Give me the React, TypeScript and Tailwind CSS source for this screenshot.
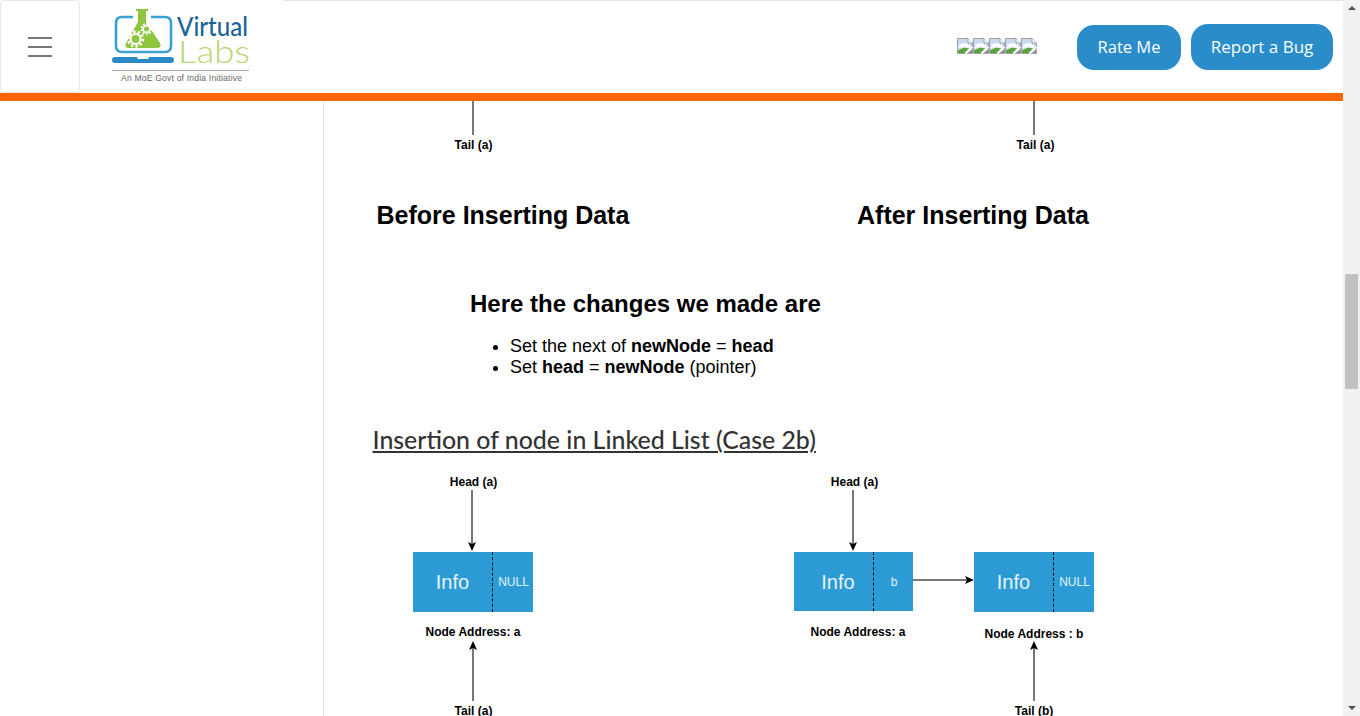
import React from 'react';

const arial = "font-['Liberation_Sans',Arial,sans-serif]";

const Logo = () => (
  <svg width="160" height="90" viewBox="100 0 160 90" aria-label="Virtual Labs">
    {/* laptop */}
    <path d="M133 17 H122 Q116 17 116 23 V46 Q116 52 122 52 H165 Q171 52 171 46 V23 Q171 17 165 17 H151" fill="none" stroke="#3a9fd3" strokeWidth="2.6" />
    <rect x="112" y="57" width="62" height="6" rx="3" fill="#2b8ac6" />
    <rect x="137" y="55" width="12" height="4" rx="2" fill="#fff" />
    {/* flask */}
    <path d="M136 9 H148 V11 H146 V22 L160 43 Q162 48 157 48 H129 Q124 48 126 43 L138 22 V11 H136 Z" fill="#8fc640" />
    <circle cx="135.5" cy="39" r="5" fill="none" stroke="#fff" strokeWidth="2.2" />
    <circle cx="135.5" cy="39" r="7.4" fill="none" stroke="#fff" strokeWidth="2.6" strokeDasharray="2.4 2.2" />
    <circle cx="146.5" cy="29" r="3.4" fill="none" stroke="#fff" strokeWidth="1.8" />
    <circle cx="146.5" cy="29" r="5.2" fill="none" stroke="#fff" strokeWidth="1.8" strokeDasharray="1.8 1.6" />
    <text x="177" y="36" fontFamily="Lato, sans-serif" fontSize="26" fontWeight="500" fill="#1c6497" textLength="71" lengthAdjust="spacingAndGlyphs">Virtual</text>
    <text x="178" y="63" fontFamily="Lato, sans-serif" fontSize="32" fontWeight="300" fill="#b7d670" textLength="72" lengthAdjust="spacingAndGlyphs">Labs</text>
    <rect x="112" y="70" width="137" height="1" fill="#aaa" />
    <text x="121" y="81" fontFamily="Liberation Sans, sans-serif" fontSize="8.6" fill="#666" textLength="121">An MoE Govt of India Initiative</text>
  </svg>
);

// the browser's missing-image glyph
const BrokenImage = () => (
  <svg width="16" height="16" viewBox="0 0 16 16" className="shrink-0">
    <path d="M0.5 0.5 H11 L15.5 5 V15.5 H0.5 Z" fill="#c9dcf3" stroke="#a0a0a0" />
    <path d="M11 0.5 V5 H15.5" fill="#fff" stroke="#a0a0a0" />
    <path d="M2 8 Q4 4.5 7 5.5 Q10 4.5 13 8 V9 H2 Z" fill="#fff" />
    <path d="M1 9 H15 V10 H1 Z" fill="#eef4fb" />
    <path d="M1 15 V12.5 L7 9.5 L12 10.5 L7.5 15 Z" fill="#5aa33a" />
    <path d="M8.5 15.5 L15.5 9" stroke="#fff" strokeWidth="1.8" />
    <path d="M11 15 L15 11.5 V15 Z" fill="#8a8a8a" />
  </svg>
);

const Header = () => (
  <header className="flex h-[93px] shrink-0 bg-white">
    <div className="flex h-[93px] w-[80px] flex-col items-center justify-center gap-[7px] rounded border border-[#e8e8e8]">
      <div className="h-[2px] w-[24px] bg-[#777]" />
      <div className="h-[2px] w-[24px] bg-[#777]" />
      <div className="h-[2px] w-[24px] bg-[#777]" />
    </div>
    <div className="w-[203px]">
      <div className="ml-[20px]">
        <Logo />
      </div>
    </div>
    <div className="flex flex-1 items-center justify-end border-t border-[#e3e3e3] pr-[10px]">
      <div className="mr-[40px] flex -translate-y-[1px]">
        {[0, 1, 2, 3, 4].map((i) => (
          <BrokenImage key={i} />
        ))}
      </div>
      <button className="mr-[10px] mt-[1px] h-[45px] w-[104px] rounded-[17px] bg-[#2a8dc9] font-['Open_Sans',sans-serif] text-[16.5px] text-white">
        Rate Me
      </button>
      <button className="h-[46px] w-[142px] rounded-[17px] bg-[#2a8dc9] pb-[1px] font-['Open_Sans',sans-serif] text-[17px] text-white">
        Report a Bug
      </button>
    </div>
  </header>
);

const Label = ({ className, children }: { className: string; children: React.ReactNode }) => (
  <span className={`absolute -translate-x-1/2 whitespace-nowrap text-[12px] leading-[14px] font-bold text-black ${className}`}>
    {children}
  </span>
);

const Node = ({ className, split, next }: { className: string; split: string; next: string }) => (
  <div className={`absolute flex bg-[#2c9bd5] text-[#e6f4fb] ${className}`}>
    <div className={`flex w-[80px] items-center justify-center border-r border-dashed border-black text-[20px] ${split}`}>Info</div>
    <div className="flex flex-1 items-center justify-center pl-[1px] text-[12px]">{next}</div>
  </div>
);

const Arrows = () => (
  <svg className="absolute left-0 top-0" width="1019" height="246" viewBox="324 470 1019 246">
    <g stroke="#777" strokeWidth="2" fill="none">
      <path d="M472 491 V546" />
      <path d="M473 702 V648" />
      <path d="M853 491 V546" />
      <path d="M913 581 H968" />
      <path d="M1034 702 V648" />
    </g>
    <g fill="#000">
      <path d="M468 543 L472 545 L476 543 L472 552 Z" />
      <path d="M469 651 L473 649 L477 651 L473 642 Z" />
      <path d="M849 543 L853 545 L857 543 L853 552 Z" />
      <path d="M965 577 L967 581 L965 585 L974 581 Z" />
      <path d="M1030 651 L1034 649 L1038 651 L1034 642 Z" />
    </g>
  </svg>
);

const App = () => (
  <div className={`flex h-[716px] w-[1360px] overflow-hidden bg-white ${arial}`}>
    <div className="flex min-w-0 flex-1 flex-col">
      <Header />
      <div className="h-[8px] shrink-0 bg-[#fd6500]" />
      <div className="flex min-h-0 flex-1">
        <aside className="w-[324px] shrink-0 border-r border-[#e5e5e5]" />
        <main className="min-w-0 flex-1">
          {/* end of the previous diagram */}
          <div className="relative h-[58px]">
            <div className="absolute left-[148px] top-0 h-[34px] w-[2px] bg-[#777]" />
            <div className="absolute left-[709px] top-0 h-[34px] w-[2px] bg-[#777]" />
            <Label className="left-[149.5px] top-[37px]">Tail (a)</Label>
            <Label className="left-[711.5px] top-[37px]">Tail (a)</Label>
          </div>

          <div className="mt-[42px] flex pl-[52.5px] text-[25px] leading-[29px] font-bold text-black">
            <h2 className="w-[480.5px]">Before Inserting Data</h2>
            <h2>After Inserting Data</h2>
          </div>

          <div className="mt-[60px] pl-[146px] text-black">
            <h2 className="text-[24px] leading-[28px] font-bold">Here the changes we made are</h2>
            <ul className="mt-[18px] list-disc pl-[40px] text-[18px] leading-[21px]">
              <li>
                Set the next of <b>newNode</b> = <b>head</b>
              </li>
              <li>
                Set <b>head</b> = <b>newNode</b> (pointer)
              </li>
            </ul>
          </div>

          <h3 className="ml-[48.5px] mt-[46px] font-['Lato',sans-serif] text-[24.9px] leading-[30px] font-medium text-[#333] underline decoration-[2px] underline-offset-[2px]">
            Insertion of node in Linked List (Case 2b)
          </h3>

          {/* Case 2b diagram */}
          <div className="relative mt-[15px] h-[246px]">
            <Arrows />
            <Label className="left-[149.5px] top-[6px]">Head (a)</Label>
            <Node className="left-[89px] top-[83px] h-[60px] w-[120px]" split="" next="NULL" />
            <Label className="left-[149px] top-[156px]">Node Address: a</Label>
            <Label className="left-[149.5px] top-[235px]">Tail (a)</Label>

            <Label className="left-[530.5px] top-[6px]">Head (a)</Label>
            <Node className="left-[470px] top-[83px] h-[59px] w-[119px]" split="pl-[9px]" next="b" />
            <Label className="left-[534px] top-[156px]">Node Address: a</Label>

            <Node className="left-[650px] top-[83px] h-[60px] w-[120px]" split="" next="NULL" />
            <Label className="left-[710px] top-[158px]">Node Address : b</Label>
            <Label className="left-[710px] top-[235px]">Tail (b)</Label>
          </div>
        </main>
      </div>
    </div>

    {/* scrollbar */}
    <div className="flex w-[17px] shrink-0 flex-col items-center justify-between bg-[#f1f1f1] py-[6px]">
      <div className="h-0 w-0 border-x-[4px] border-b-[4px] border-x-transparent border-b-[#505050]" />
      <div className="h-0 w-0 border-x-[4px] border-t-[4px] border-x-transparent border-t-[#505050]" />
    </div>
    <div className="absolute left-[1345px] top-[274px] h-[115px] w-[13px] bg-[#c1c1c1]" />
  </div>
);

export default App;
